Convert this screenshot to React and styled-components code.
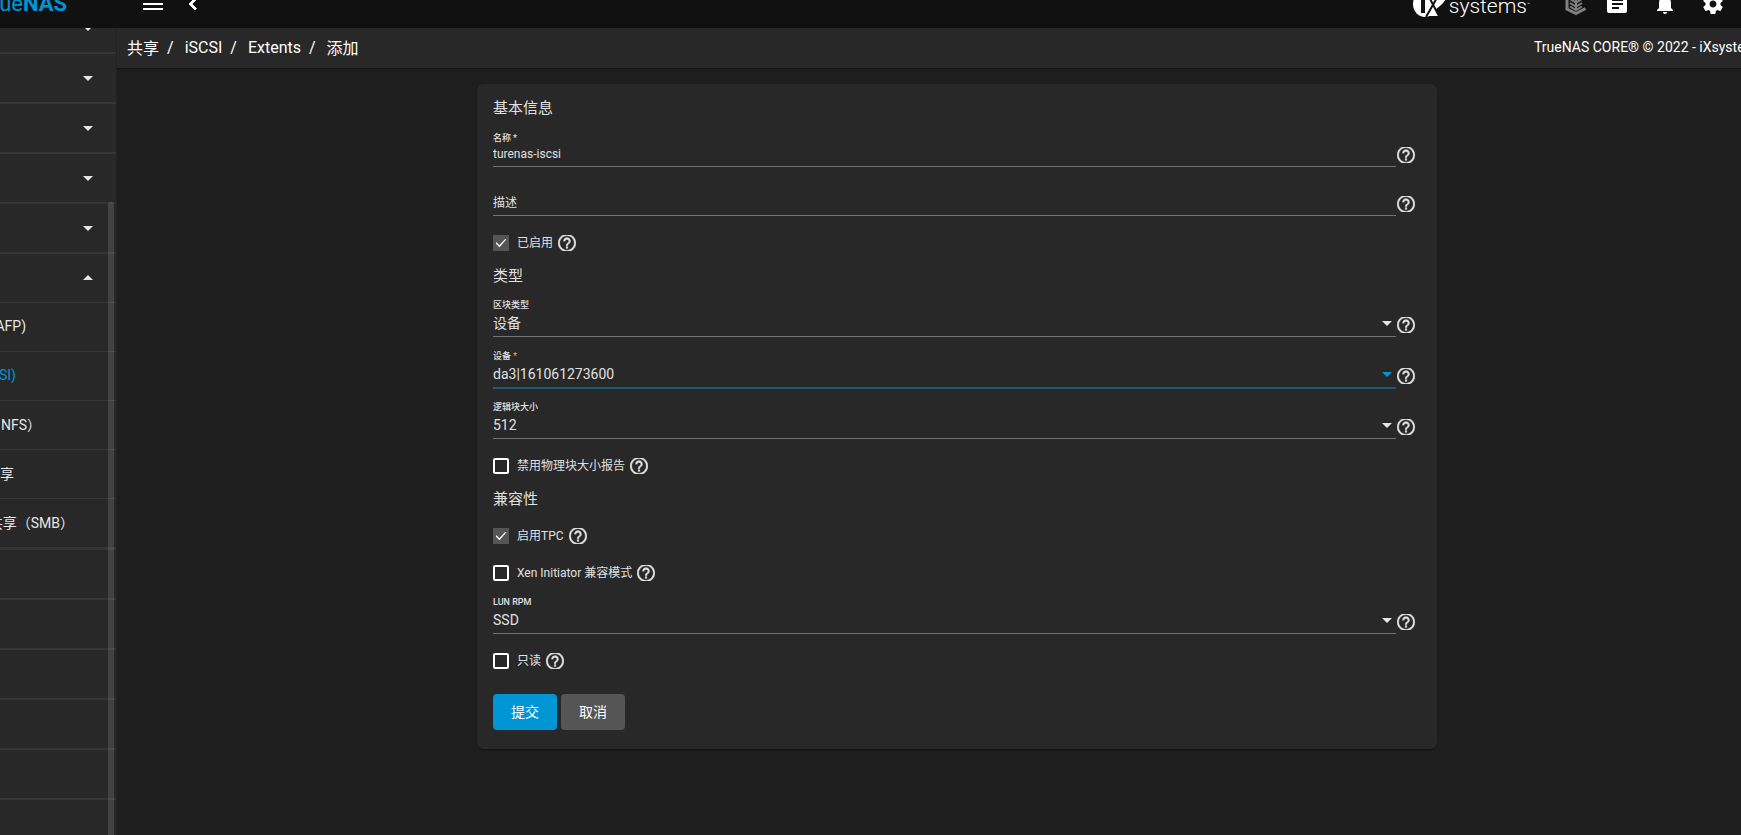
import React, { useState } from 'react';
import styled, { createGlobalStyle } from 'styled-components';

const GlobalStyle = createGlobalStyle`
  * {
    box-sizing: border-box;
  }
  body {
    margin: 0;
    background: #1e1e1e;
    color: #e0e0e0;
    font-family: Roboto, 'Noto Sans CJK SC', sans-serif;
    font-size: 14px;
    overflow: hidden;
  }
  button, input, select {
    font-family: inherit;
  }
`;

const Page = styled.div`
  display: flex;
  flex-direction: column;
  height: 100vh;
  margin-right: -56px;
`;

const TopBar = styled.header`
  flex: none;
  overflow: hidden;
  background: #111;
`;

const TopBarInner = styled.div`
  display: flex;
  align-items: center;
  height: 48px;
  margin-top: -20px;
  padding-right: 72px;
`;

const Brand = styled.div`
  display: flex;
  justify-content: flex-end;
  width: 67px;
  margin-right: 74px;
  color: #0095d5;
  font-size: 22px;
  line-height: 24px;
  font-weight: 400;

  b {
    font-weight: 700;
  }
`;

const IconButton = styled.button`
  display: flex;
  align-items: center;
  justify-content: center;
  width: 24px;
  height: 24px;
  padding: 0;
  border: 0;
  background: none;
  color: #fff;
  cursor: pointer;
`;

const NavButtons = styled.div`
  display: flex;
  gap: 16px;
`;

const Vendor = styled.a`
  display: flex;
  align-items: center;
  gap: 2px;
  margin-left: auto;
  color: #fff;
  text-decoration: none;
`;

const VendorName = styled.span`
  display: flex;
  padding-top: 3px;
  font-size: 21px;
  line-height: 24px;
  font-weight: 300;

  small {
    font-size: 5px;
    line-height: 20px;
  }
`;

const Tools = styled.div`
  display: flex;
  gap: 24px;
  margin-left: 34px;

  button:first-child {
    margin-right: -7px;
  }
`;

const Body = styled.div`
  display: flex;
  flex: 1;
  min-height: 0;
`;

const Sidebar = styled.nav`
  position: relative;
  flex: none;
  width: 117px;
  overflow: hidden;
  background: #282828;
  border-right: 1px solid #222;
`;

const Menu = styled.div`
  margin-top: -24px;
`;

const MenuItem = styled.button`
  display: flex;
  align-items: center;
  justify-content: flex-end;
  width: 100%;
  height: ${(props) => (props.$open ? '48px' : '50px')};
  padding: ${(props) => (props.$open ? '0 23px 2px 0' : '0 23px 0 0')};
  border: 0;
  border-bottom: ${(props) => (props.$open ? '0' : '2px solid #353535')};
  background: none;
  color: #e6e6e6;
`;

const SubMenu = styled.div`
  border-bottom: 3px solid #353535;
`;

const SubItem = styled.a`
  display: flex;
  align-items: center;
  height: 49px;
  padding-bottom: 2px;
  border-top: 1px solid #383838;
  color: ${(props) => (props.$active ? '#0095d5' : '#e6e6e6')};
  text-decoration: none;
`;

const SubLabel = styled.span`
  display: flex;
  justify-content: flex-end;
  width: ${(props) => props.$reach}px;
  overflow: hidden;
  white-space: nowrap;
`;

const Scrollbar = styled.div`
  position: absolute;
  top: 174px;
  right: 2px;
  bottom: 0;
  width: 6px;
  border-radius: 3px 3px 0 0;
  background: rgba(255, 255, 255, 0.12);
`;

const Main = styled.main`
  flex: 1;
  min-width: 0;
`;

const Breadcrumb = styled.div`
  display: flex;
  align-items: center;
  height: 40px;
  padding: 0 11px 2px 10px;
  background: #282828;
  box-shadow: 0 1px 2px rgba(0, 0, 0, 0.4);
  color: #fff;
  font-size: 16px;
`;

const Crumb = styled.a`
  color: #fff;
  text-decoration: none;
`;

const Slash = styled.span`
  margin: 0 11px 0 8px;
`;

const Copyright = styled.span`
  width: 252px;
  margin-left: auto;
  font-size: 14px;
  white-space: nowrap;
`;

const Card = styled.form`
  width: 960px;
  max-width: 100%;
  margin: 16px auto 0;
  padding: 12px 22px 19px 16px;
  border-radius: 6px;
  background: #282828;
  box-shadow: 0 1px 2px rgba(0, 0, 0, 0.4);
`;

const Title = styled.h2`
  margin: 0;
  padding-top: 2px;
  font-size: 15px;
  line-height: 20px;
  font-weight: 400;

  div + & {
    margin-top: 13px;
  }
`;

const CheckRow = styled.div`
  display: flex;
  align-items: center;
  gap: 5px;
  height: 16px;
  margin-top: 19px;

  & + & {
    margin-top: 21px;
  }
`;

const Field = styled.div`
  display: flex;
  align-items: flex-end;
  gap: 1px;
  margin-top: ${(props) => (props.$select ? '13px' : '14px')};

  ${CheckRow} + & {
    margin-top: 15px;
  }
`;

const FieldMain = styled.div`
  position: relative;
  display: flex;
  flex-direction: column;
  flex: 1;
  padding-top: ${(props) => (props.$bare ? '12px' : '0')};
`;

const FieldLabel = styled.label`
  font-size: 9px;
  line-height: 12px;
  font-weight: 500;
`;

const Star = styled.span`
  margin-left: 2px;
  color: ${(props) => (props.$warn ? '#f0b000' : 'inherit')};
`;

const Input = styled.input`
  height: 23px;
  padding: 0 0 2px;
  border: 0;
  border-bottom: 1px solid #727272;
  border-radius: 0;
  outline: 0;
  background: none;
  color: #e0e0e0;
  font-size: 12px;
  line-height: 18px;

  &::placeholder {
    color: #e0e0e0;
    opacity: 1;
  }
`;

const Select = styled.select`
  height: 26px;
  padding: 0 0 1px;
  border: 0;
  border-bottom: 1px solid ${(props) => (props.$active ? '#1b5a76' : '#727272')};
  border-radius: 0;
  box-shadow: ${(props) => (props.$active ? '0 1px #1b5a76' : 'none')};
  outline: 0;
  appearance: none;
  background: none;
  color: #e0e0e0;
  font-size: 14px;

  option {
    background: #282828;
  }
`;

const SelectCaret = styled.span`
  position: absolute;
  right: 4px;
  bottom: 11px;
  display: flex;
  color: ${(props) => (props.$active ? '#0095d5' : '#e6e6e6')};
  pointer-events: none;
`;

const Help = styled.button`
  display: flex;
  padding: 0;
  border: 0;
  margin-bottom: ${(props) => (props.$inField ? '4px' : '0')};
  background: none;
  color: #e0e0e0;
  cursor: pointer;
`;

const CheckLabel = styled.label`
  display: flex;
  align-items: center;
  gap: 8px;
  font-size: 12px;
  line-height: 16px;
`;

const Checkbox = styled.input`
  display: grid;
  place-content: center;
  appearance: none;
  width: 16px;
  height: 16px;
  margin: 0;
  border: 2px solid #fff;
  border-radius: 2px;

  &:checked {
    border: 0;
    border-radius: 0;
    background: #555;
  }
  &:checked::before {
    content: '';
    width: 11px;
    height: 9px;
    background: #fff;
    clip-path: polygon(0 52%, 9% 42%, 35% 76%, 92% 0, 100% 9%, 36% 98%);
  }
`;

const Actions = styled.div`
  display: flex;
  gap: 4px;
  margin-top: 25px;
`;

const Button = styled.button`
  min-width: 64px;
  height: 36px;
  padding: 0 16px 3px;
  border: 0;
  border-radius: 4px;
  background: ${(props) => (props.$primary ? '#0095d5' : '#555')};
  color: #fff;
  font-size: 14px;
`;

const Caret = ({ up }) => (
  <svg width="10" height="5" viewBox="0 0 10 5" fill="currentColor" aria-hidden="true">
    <path d={up ? 'M0 5 5 0l5 5z' : 'M0 0l5 5 5-5z'} />
  </svg>
);

const HelpButton = ({ inField }) => (
  <Help type="button" $inField={inField} aria-label="help">
    <svg width="18" height="16" viewBox="2 3.1 20 17.8" fill="currentColor" stroke="currentColor" strokeWidth="0.3">
      <path d="M11 18h2v-2h-2v2zm1-16C6.48 2 2 6.48 2 12s4.48 10 10 10 10-4.48 10-10S17.52 2 12 2zm0 18c-4.41 0-8-3.59-8-8s3.59-8 8-8 8 3.59 8 8-3.59 8-8 8zm0-14c-2.21 0-4 1.79-4 4h2c0-1.1.9-2 2-2s2 .9 2 2c0 2-3 1.75-3 5h2c0-2.25 3-2.5 3-5 0-2.21-1.79-4-4-4z" />
    </svg>
  </Help>
);

const TextField = ({ id, label, placeholder, value, required }) => {
  const [text, setText] = useState(value);
  return (
    <Field>
      <FieldMain $bare={!label}>
        {label && (
          <FieldLabel htmlFor={id}>
            {label}
            {required && <Star>*</Star>}
          </FieldLabel>
        )}
        <Input
          id={id}
          value={text}
          placeholder={placeholder}
          aria-label={placeholder}
          onChange={(e) => setText(e.target.value)}
        />
      </FieldMain>
      <HelpButton inField />
    </Field>
  );
};

const SelectField = ({ id, label, value, required, active }) => (
  <Field $select>
    <FieldMain>
      <FieldLabel htmlFor={id}>
        {label}
        {required && <Star $warn>*</Star>}
      </FieldLabel>
      <Select id={id} $active={active} defaultValue={value}>
        <option value={value}>{value}</option>
      </Select>
      <SelectCaret $active={active}>
        <Caret />
      </SelectCaret>
    </FieldMain>
    <HelpButton inField />
  </Field>
);

const CheckField = ({ label, checked }) => (
  <CheckRow>
    <CheckLabel>
      <Checkbox type="checkbox" defaultChecked={checked} />
      {label}
    </CheckLabel>
    <HelpButton />
  </CheckRow>
);

const shares = [
  { text: 'AFP)', reach: 26 },
  { text: 'SI)', reach: 16, active: true },
  { text: 'NFS）', reach: 41 },
  { text: '享', reach: 14 },
  { text: '共享（SMB）', reach: 74 },
];

const App = () => (
  <>
    <GlobalStyle />
    <Page>
      <TopBar>
        <TopBarInner>
          <Brand>
            ue<b>NAS</b>
          </Brand>
          <NavButtons>
            <IconButton aria-label="menu">
              <svg width="20" height="12" viewBox="0 0 20 12" fill="currentColor">
                <path d="M0 0h20v2H0zM0 5h20v2H0zM0 10h20v2H0z" />
              </svg>
            </IconButton>
            <IconButton aria-label="back">
              <svg width="24" height="24" viewBox="0 0 24 24" fill="currentColor">
                <path d="M15.41 7.41 14 6l-6 6 6 6 1.41-1.41L10.83 12z" stroke="currentColor" />
              </svg>
            </IconButton>
          </NavButtons>
          <Vendor href="#ixsystems">
            <svg width="34" height="26" viewBox="0 0 34 26" fill="none">
              <ellipse cx="12" cy="13" rx="12" ry="13" fill="#fff" />
              <path d="M16 0h17c3 7-3 13-10 18zM20 15l6 10H13z" fill="#fff" />
              <path d="M8 9h4v13H8zM10 4h3v3h-3z" fill="#111" />
              <path d="M25 5 13 26M15 4l12 23" stroke="#111" strokeWidth="2" />
            </svg>
            <VendorName>
              systems<small>™</small>
            </VendorName>
          </Vendor>
          <Tools>
            <IconButton aria-label="truecommand">
              <svg width="22" height="22" viewBox="0 0 22 22" fill="none" stroke="#808080">
                <path d="M2 2v14l9 4.500 9.500-5" strokeWidth="3" />
                <path d="M11 2v15M5 2l6 3.500L17 2M5 6l6 3.500L17 6M5 10l6 3.500 6-3.500M5 13.500l6 3.500 6-3.500" strokeWidth="2" />
              </svg>
            </IconButton>
            <IconButton aria-label="tasks">
              <svg width="20" height="20" viewBox="0 1 20 20" fill="currentColor">
                <path
                  fillRule="evenodd"
                  d="M2 0h16a2 2 0 0 1 2 2v16a2 2 0 0 1-2 2H2a2 2 0 0 1-2-2V2a2 2 0 0 1 2-2zm3 6v2h11V6zm0 4v2h11v-2zm0 4v2h7v-2z"
                />
              </svg>
            </IconButton>
            <IconButton aria-label="notifications">
              <svg width="24" height="24" viewBox="0 0 24 24" fill="currentColor">
                <path d="M12 22c1.1 0 2-.9 2-2h-4c0 1.1.89 2 2 2zm6-6v-5c0-3.07-1.64-5.64-4.5-6.32V4c0-.83-.67-1.5-1.5-1.5s-1.5.67-1.5 1.5v.68C7.63 5.36 6 7.92 6 11v5l-2 2v1h16v-1l-2-2z" />
              </svg>
            </IconButton>
            <IconButton aria-label="settings">
              <svg width="24" height="24" viewBox="0 0 24 24" fill="currentColor">
                <path d="M19.43 12.98c.04-.32.07-.64.07-.98s-.03-.66-.07-.98l2.11-1.65c.19-.15.24-.42.12-.64l-2-3.46c-.12-.22-.39-.3-.61-.22l-2.49 1c-.52-.4-1.08-.73-1.69-.98l-.38-2.65C14.46 2.18 14.25 2 14 2h-4c-.25 0-.46.18-.49.42l-.38 2.65c-.61.25-1.17.59-1.69.98l-2.49-1c-.23-.09-.49 0-.61.22l-2 3.46c-.13.22-.07.49.12.64l2.11 1.65c-.04.32-.07.65-.07.98s.03.66.07.98l-2.11 1.65c-.19.15-.24.42-.12.64l2 3.46c.12.22.39.3.61.22l2.49-1c.52.4 1.08.73 1.69.98l.38 2.65c.03.24.24.42.49.42h4c.25 0 .46-.18.49-.42l.38-2.65c.61-.25 1.17-.59 1.69-.98l2.49 1c.23.09.49 0 .61-.22l2-3.46c.12-.22.07-.49-.12-.64l-2.11-1.65zM12 15.5c-1.93 0-3.5-1.57-3.5-3.5s1.57-3.5 3.5-3.5 3.5 1.57 3.5 3.5-1.57 3.5-3.5 3.5z" />
              </svg>
            </IconButton>
          </Tools>
        </TopBarInner>
      </TopBar>
      <Body>
        <Sidebar>
          <Menu>
            {[1, 2, 3, 4, 5].map((n) => (
              <MenuItem key={n} aria-label={`menu ${n}`}>
                <Caret />
              </MenuItem>
            ))}
            <MenuItem $open aria-label="menu 6">
              <Caret up />
            </MenuItem>
            <SubMenu>
              {shares.map((share) => (
                <SubItem key={share.text} href="#share" $active={share.active}>
                  <SubLabel $reach={share.reach}>{share.text}</SubLabel>
                </SubItem>
              ))}
            </SubMenu>
            {[7, 8, 9, 10, 11, 12].map((n) => (
              <MenuItem key={n} aria-label={`menu ${n}`} />
            ))}
          </Menu>
          <Scrollbar />
        </Sidebar>
        <Main>
          <Breadcrumb>
            <Crumb href="#sharing">共享</Crumb>
            <Slash>/</Slash>
            <Crumb href="#iscsi">iSCSI</Crumb>
            <Slash>/</Slash>
            <Crumb href="#extents">Extents</Crumb>
            <Slash>/</Slash>
            <Crumb href="#add">添加</Crumb>
            <Copyright>TrueNAS CORE® © 2022 - iXsystems, Inc.</Copyright>
          </Breadcrumb>
          <Card onSubmit={(e) => e.preventDefault()}>
            <Title>基本信息</Title>
            <TextField id="name" label="名称" value="turenas-iscsi" required />
            <TextField id="comment" placeholder="描述" value="" />
            <CheckField label="已启用" checked />
            <Title>类型</Title>
            <SelectField id="type" label="区块类型" value="设备" />
            <SelectField id="disk" label="设备" value="da3|161061273600" required active />
            <SelectField id="blocksize" label="逻辑块大小" value="512" />
            <CheckField label="禁用物理块大小报告" />
            <Title>兼容性</Title>
            <CheckField label="启用TPC" checked />
            <CheckField label="Xen Initiator 兼容模式" />
            <SelectField id="rpm" label="LUN RPM" value="SSD" />
            <CheckField label="只读" />
            <Actions>
              <Button type="submit" $primary>提交</Button>
              <Button type="button">取消</Button>
            </Actions>
          </Card>
        </Main>
      </Body>
    </Page>
  </>
);

export default App;
